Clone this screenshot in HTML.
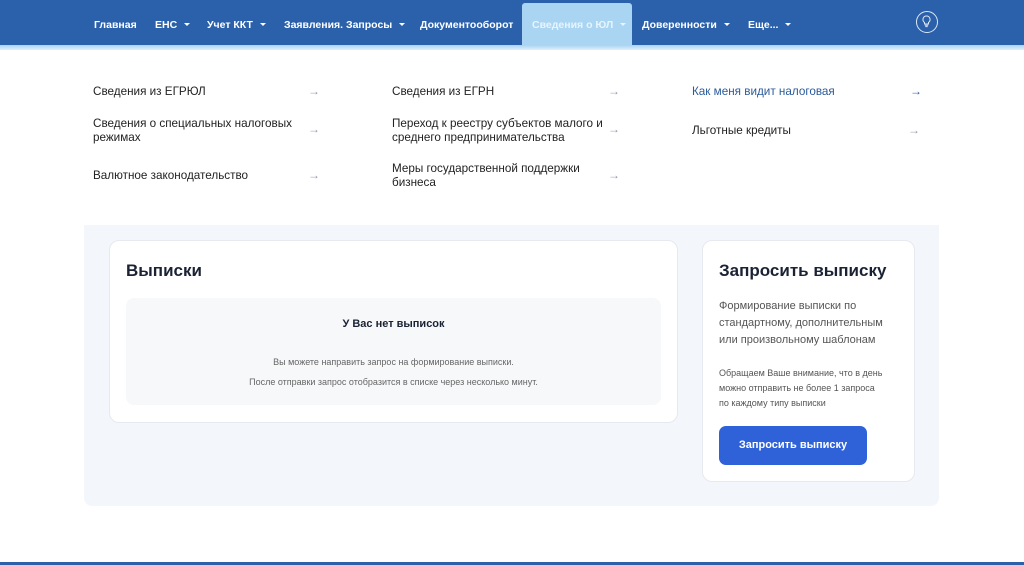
<!DOCTYPE html>
<html><head><meta charset="utf-8">
<style>
*{margin:0;padding:0;box-sizing:border-box}
body{width:1024px;height:565px;overflow:hidden;background:#fff;font-family:"Liberation Sans","DejaVu Sans",sans-serif;position:relative}
.nav{position:absolute;left:0;top:0;width:1024px;height:45px;background:#2b60aa}
.strip{position:absolute;left:0;top:45px;width:1024px;height:5px;background:linear-gradient(#a9d3f1,#dff0fb)}
.nav .it{position:absolute;top:19px;color:#fff;font-size:10.5px;font-weight:bold;white-space:nowrap}
.car{display:inline-block;width:0;height:0;border-left:3px solid transparent;border-right:3px solid transparent;border-top:3px solid #fff;margin-left:7px;vertical-align:2px}
.active{position:absolute;left:522px;top:3px;width:110px;height:42px;background:#a9d5f3;border-radius:3px 3px 0 0}
.bulb{position:absolute;left:916px;top:11px;width:22px;height:22px;border:1.5px solid #dce9f7;border-radius:50%}
.m{position:absolute;font-size:11.7px;color:#222;line-height:14px}
.ar{position:absolute;font-size:12px;color:#99a}
.panel{position:absolute;left:84px;top:225px;width:855px;height:281px;background:#f3f6fb;border-radius:0 0 8px 8px}
.card{position:absolute;background:#fff;border:1px solid #e6e9ef;border-radius:10px}
h2{font-size:17px;color:#1a2233;font-weight:bold}
.foot{position:absolute;left:0;top:562px;width:1024px;height:3px;background:#2b60aa}
</style></head><body>
<div class="nav">
<div class="active"></div>
<div class="it" style="left:94px">Главная</div>
<div class="it" style="left:155px">ЕНС<span class="car"></span></div>
<div class="it" style="left:207px">Учет ККТ<span class="car"></span></div>
<div class="it" style="left:284px">Заявления. Запросы<span class="car"></span></div>
<div class="it" style="left:420px">Документооборот</div>
<div class="it" style="left:532px;color:#e8f4fd">Сведения о ЮЛ<span class="car" style="border-top-color:#e8f4fd"></span></div>
<div class="it" style="left:642px">Доверенности<span class="car"></span></div>
<div class="it" style="left:748px">Еще...<span class="car"></span></div>
<div class="bulb"><svg width="19" height="19" viewBox="0 0 19 19"><path d="M9.5 4a3.5 3.5 0 0 0-2 6.4V12h4v-1.6A3.5 3.5 0 0 0 9.5 4zM7.8 13.3h3.4M8.3 14.6h2.4" fill="none" stroke="#dce9f7" stroke-width="1"/></svg></div>
</div>
<div class="strip"></div>

<div class="m" style="left:93px;top:85px">Сведения из ЕГРЮЛ</div><div class="ar" style="left:308px;top:84px">→</div>
<div class="m" style="left:93px;top:117px">Сведения о специальных налоговых<br>режимах</div><div class="ar" style="left:308px;top:122px">→</div>
<div class="m" style="left:93px;top:169px">Валютное законодательство</div><div class="ar" style="left:308px;top:168px">→</div>
<div class="m" style="left:392px;top:85px">Сведения из ЕГРН</div><div class="ar" style="left:608px;top:84px">→</div>
<div class="m" style="left:392px;top:117px">Переход к реестру субъектов малого и<br>среднего предпринимательства</div><div class="ar" style="left:608px;top:122px">→</div>
<div class="m" style="left:392px;top:162px">Меры государственной поддержки<br>бизнеса</div><div class="ar" style="left:608px;top:168px">→</div>
<div class="m" style="left:692px;top:85px;color:#2b5a9a">Как меня видит налоговая</div><div class="ar" style="left:910px;top:84px;color:#2b5a9a">→</div>
<div class="m" style="left:692px;top:124px">Льготные кредиты</div><div class="ar" style="left:908px;top:123px">→</div>

<div class="panel"></div>
<div class="card" style="left:109px;top:240px;width:569px;height:183px">
<h2 style="position:absolute;left:16px;top:20px">Выписки</h2>
<div style="position:absolute;left:16px;top:57px;width:535px;height:107px;background:#f7f8fa;border-radius:8px;text-align:center">
<div style="margin-top:20px;font-size:11px;font-weight:bold;color:#1a2233">У Вас нет выписок</div>
<div style="margin-top:22px;font-size:9px;color:#666;line-height:20px">Вы можете направить запрос на формирование выписки.<br>После отправки запрос отобразится в списке через несколько минут.</div>
</div></div>
<div class="card" style="left:702px;top:240px;width:213px;height:242px">
<h2 style="position:absolute;left:16px;top:20px">Запросить выписку</h2>
<div style="position:absolute;left:16px;top:57px;font-size:11px;color:#555;line-height:17px">Формирование выписки по<br>стандартному, дополнительным<br>или произвольному шаблонам</div>
<div style="position:absolute;left:16px;top:125px;font-size:9px;color:#555;line-height:15px">Обращаем Ваше внимание, что в день<br>можно отправить не более 1 запроса<br>по каждому типу выписки</div>
<div style="position:absolute;left:16px;top:185px;width:148px;height:39px;background:#2f62d9;border-radius:7px;color:#fff;font-size:11px;font-weight:bold;text-align:center;line-height:39px">Запросить выписку</div>
</div>
<div class="foot"></div>
</body></html>
